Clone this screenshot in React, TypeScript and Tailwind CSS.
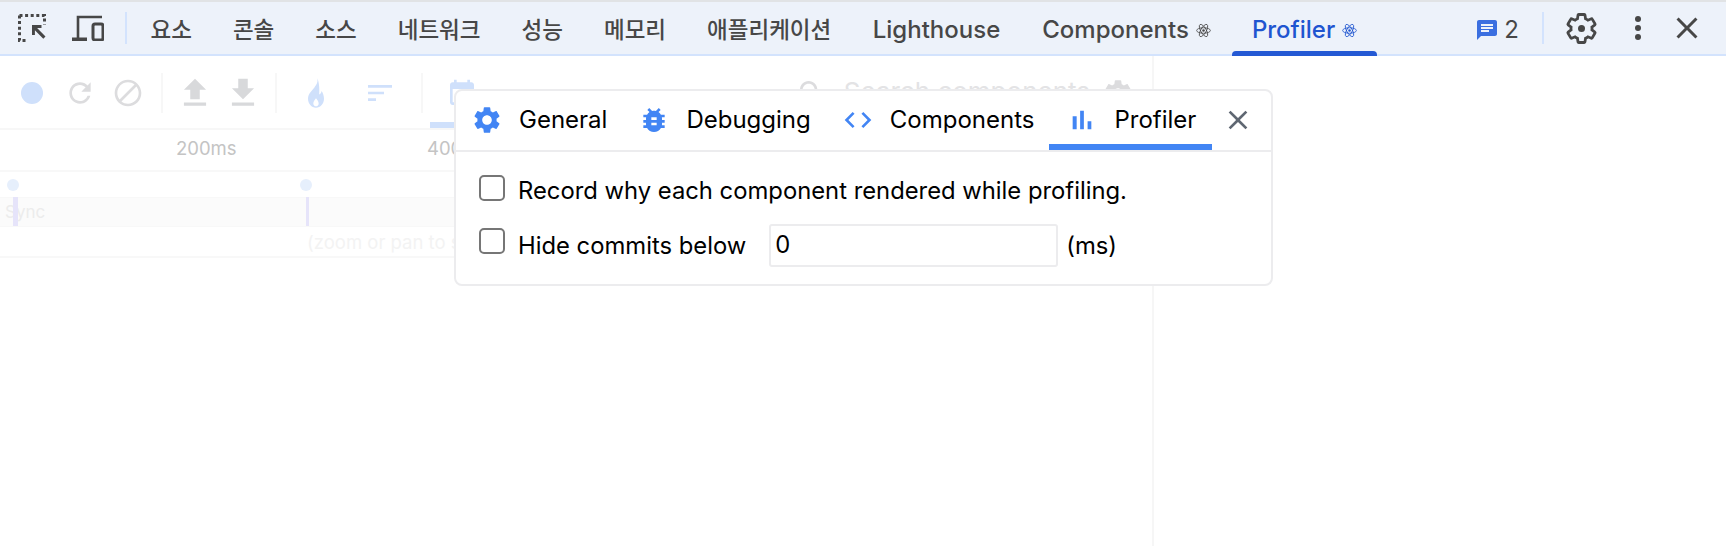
const FONT = "font-['Inter','Noto_Sans_CJK_KR',sans-serif]";

const paths = {
  gear: 'M19.14 12.94c.04-.3.06-.61.06-.94 0-.32-.02-.64-.07-.94l2.03-1.58c.18-.14.23-.41.12-.61l-1.92-3.32c-.12-.22-.37-.29-.59-.22l-2.39.96c-.5-.38-1.03-.7-1.62-.94l-.36-2.54c-.04-.24-.24-.41-.48-.41h-3.84c-.24 0-.43.17-.47.41l-.36 2.54c-.59.24-1.13.57-1.62.94l-2.39-.96c-.22-.08-.47 0-.59.22L2.74 8.87c-.12.21-.08.47.12.61l2.03 1.58c-.05.3-.09.63-.09.94s.02.64.07.94l-2.03 1.58c-.18.14-.23.41-.12.61l1.92 3.32c.12.22.37.29.59.22l2.39-.96c.5.38 1.03.7 1.62.94l.36 2.54c.05.24.24.41.48.41h3.84c.24 0 .44-.17.47-.41l.36-2.54c.59-.24 1.13-.56 1.62-.94l2.39.96c.22.08.47 0 .59-.22l1.92-3.32c.12-.22.07-.47-.12-.61l-2.01-1.58zM12 15.6c-1.98 0-3.6-1.62-3.6-3.6s1.62-3.6 3.6-3.6 3.6 1.62 3.6 3.6-1.62 3.6-3.6 3.6z',
  bug: 'M20 8h-2.81c-.45-.78-1.07-1.45-1.82-1.96L17 4.41 15.59 3l-2.17 2.17C12.96 5.06 12.49 5 12 5c-.49 0-.96.06-1.41.17L8.41 3 7 4.41l1.62 1.63C7.88 6.55 7.26 7.22 6.81 8H4v2h2.09c-.05.33-.09.66-.09 1v1H4v2h2v1c0 .34.04.67.09 1H4v2h2.81c1.04 1.79 2.97 3 5.19 3s4.15-1.21 5.19-3H20v-2h-2.09c.05-.33.09-.66.09-1v-1h2v-2h-2v-1c0-.34-.04-.67-.09-1H20V8zm-6 8h-4v-2h4v2zm0-4h-4v-2h4v2z',
  code: 'M9.4 16.6L4.8 12l4.6-4.6L8 6l-6 6 6 6 1.4-1.4zm5.2 0l4.6-4.6-4.6-4.6L16 6l6 6-6 6-1.4-1.4z',
  bars: 'M5 9.2h3V19H5zM10.6 5h2.8v14h-2.8zm5.6 8H19v6h-2.8z',
  close: 'M19 6.41L17.59 5 12 10.59 6.41 5 5 6.41 10.59 12 5 17.59 6.41 19 12 13.41 17.59 19 19 17.59 13.41 12z',
  reload: 'M17.65 6.35C16.2 4.9 14.21 4 12 4c-4.42 0-7.99 3.58-7.99 8s3.57 8 7.99 8c3.73 0 6.84-2.55 7.73-6h-2.08c-.82 2.33-3.04 4-5.65 4-3.31 0-6-2.69-6-6s2.69-6 6-6c1.66 0 3.14.69 4.22 1.78L13 11h7V4l-2.35 2.35z',
  block: 'M12 2C6.48 2 2 6.48 2 12s4.48 10 10 10 10-4.48 10-10S17.52 2 12 2zM4 12c0-4.42 3.58-8 8-8 1.85 0 3.55.63 4.9 1.69L5.69 16.9C4.63 15.55 4 13.85 4 12zm8 8c-1.85 0-3.55-.63-4.9-1.69L18.31 7.1C19.37 8.45 20 10.15 20 12c0 4.42-3.58 8-8 8z',
  upload: 'M9 16h6v-6h4l-7-7-7 7h4zm-4 2h14v2H5z',
  download: 'M19 9h-4V3H9v6H5l7 7 7-7zM5 18v2h14v-2H5z',
  flame: 'M13 1c.6 3.2-.7 5-2.3 7C9 10.2 6 12.5 6 16.3 6 20 8.7 23 12 23s6-3 6-6.7c0-2.3-.8-4.3-1.8-5.8-.3 1.3-.9 2.1-1.8 2.7.4-4.5-.2-9.7-1.4-12.2zM12 16c1 1.3 2 2.4 2 3.8 0 1.3-.9 2.2-2 2.2s-2-.9-2-2.2c0-1.4 1-2.5 2-3.8z',
  sort: 'M3 18h6v-2H3v2zM3 6v2h18V6H3zm0 7h12v-2H3v2z',
  calendar: 'M19 4h-1V2h-2v2H8V2H6v2H5c-1.1 0-2 .9-2 2v13c0 1.1.9 2 2 2h14c1.1 0 2-.9 2-2V6c0-1.1-.9-2-2-2zm0 15H5V9h14v10z',
  search: 'M15.5 14h-.79l-.28-.27C15.41 12.59 16 11.11 16 9.5 16 5.91 13.09 3 9.5 3S3 5.91 3 9.5 5.91 16 9.5 16c1.61 0 3.09-.59 4.23-1.57l.27.28v.79l5 4.99L20.49 19l-4.99-5zm-6 0C7.01 14 5 11.99 5 9.5S7.01 5 9.5 5 14 7.01 14 9.5 11.99 14 9.5 14z',
};

function Icon({ d, className }: { d: string; className: string }) {
  return (
    <svg viewBox="0 0 24 24" fill="currentColor" fillRule="evenodd" className={className}>
      <path d={d} />
    </svg>
  );
}

function Atom({ className }: { className: string }) {
  return (
    <svg viewBox="0 0 24 24" fill="none" stroke="currentColor" strokeWidth="1.3" className={className}>
      <circle cx="12" cy="12" r="2" fill="currentColor" stroke="none" />
      <ellipse cx="12" cy="12" rx="11" ry="4.4" />
      <ellipse cx="12" cy="12" rx="11" ry="4.4" transform="rotate(60 12 12)" />
      <ellipse cx="12" cy="12" rx="11" ry="4.4" transform="rotate(120 12 12)" />
    </svg>
  );
}

function KoTab({ label }: { label: string }) {
  return <div className="flex h-full items-center px-[20.5px] pt-[4px] text-[22.5px] font-medium text-[#474747]">{label}</div>;
}

function DevToolsBar() {
  return (
    <div className="box-content flex h-[52px] items-center border-b-2 border-[#d3e3fd] bg-[#edf2fa]">
      <div className="ml-[18px] flex items-center gap-[26px]">
        <svg viewBox="0 0 28 28" fill="none" className="h-7 w-7 text-[#474747]">
          <path d="M1.5 1.5h25v9M1.5 1.5v25h8" stroke="currentColor" strokeWidth="3" strokeDasharray="3 2.6" />
          <path d="M14 11h9.5v3h-4.4l8.4 8.5-2.2 2.2-8.4-8.5V21H14z" fill="currentColor" />
        </svg>
        <svg viewBox="0 0 32 26" fill="none" className="h-[26px] w-8 text-[#474747]">
          <path d="M6 23V2h24" stroke="currentColor" strokeWidth="2.6" />
          <path d="M0 22.5h15V26H0z" fill="currentColor" />
          <rect x="21" y="9" width="10" height="16" rx="2" stroke="currentColor" strokeWidth="3" />
        </svg>
      </div>
      <div className="ml-[21px] mr-[3px] h-8 w-[2px] bg-[#d3e3fd]" />
      <KoTab label="요소" />
      <KoTab label="콘솔" />
      <KoTab label="소스" />
      <KoTab label="네트워크" />
      <KoTab label="성능" />
      <KoTab label="메모리" />
      <KoTab label="애플리케이션" />
      <div className="flex h-full items-center px-[21px] pt-[4px] text-[24px] font-medium text-[#474747]">Lighthouse</div>
      <div className="flex h-full items-center gap-[7px] px-[21px] pt-[4px] text-[24px] font-medium text-[#474747]">
        Components
        <Atom className="h-[15px] w-[15px]" />
      </div>
      <div className="relative flex h-full items-center gap-[7px] px-[20px] pt-[4px] text-[24px] font-medium text-[#1f55d0]">
        Profiler
        <Atom className="h-[15px] w-[15px]" />
        <div className="absolute bottom-[-2px] left-0 right-0 h-[5px] rounded-t-[4px] bg-[#2459d4]" />
      </div>
      <div className="ml-auto flex items-center">
        <div className="flex items-center pt-[4px]">
          <Icon
            d="M20 2H4c-1.1 0-2 .9-2 2v18l4-4h14c1.1 0 2-.9 2-2V4c0-1.1-.9-2-2-2zM6 9h12v2H6V9zm8 5H6v-2h8v2zm4-6H6V6h12v2z"
            className="h-6 w-6 text-[#3b6fe0]"
          />
          <span className="ml-[5px] text-[24px] text-[#474747]">2</span>
        </div>
        <div className="ml-[23px] h-8 w-[2px] bg-[#d3e3fd]" />
        <svg viewBox="0 0 24 24" fill="none" stroke="#474747" strokeWidth="1.9" className="ml-[20px] h-[35px] w-[35px]">
          <path d="M19.14 12.94c.04-.3.06-.61.06-.94 0-.32-.02-.64-.07-.94l2.03-1.58c.18-.14.23-.41.12-.61l-1.92-3.32c-.12-.22-.37-.29-.59-.22l-2.39.96c-.5-.38-1.03-.7-1.62-.94l-.36-2.54c-.04-.24-.24-.41-.48-.41h-3.84c-.24 0-.43.17-.47.41l-.36 2.54c-.59.24-1.13.57-1.62.94l-2.39-.96c-.22-.08-.47 0-.59.22L2.74 8.87c-.12.21-.08.47.12.61l2.03 1.58c-.05.3-.09.63-.09.94s.02.64.07.94l-2.03 1.58c-.18.14-.23.41-.12.61l1.92 3.32c.12.22.37.29.59.22l2.39-.96c.5.38 1.03.7 1.62.94l.36 2.54c.05.24.24.41.48.41h3.84c.24 0 .44-.17.47-.41l.36-2.54c.59-.24 1.13-.56 1.62-.94l2.39.96c.22.08.47 0 .59-.22l1.92-3.32c.12-.22.07-.47-.12-.61l-2.01-1.58z" />
          <circle cx="12" cy="12" r="2.4" fill="#474747" stroke="none" />
        </svg>
        <div className="ml-[36px] flex flex-col gap-[3px]">
          <div className="h-[6px] w-[6px] rounded-full bg-[#474747]" />
          <div className="h-[6px] w-[6px] rounded-full bg-[#474747]" />
          <div className="h-[6px] w-[6px] rounded-full bg-[#474747]" />
        </div>
        <Icon d={paths.close} className="ml-[28px] mr-[21px] h-9 w-9 text-[#474747]" />
      </div>
    </div>
  );
}

function ToolbarSep() {
  return <div className="h-10 w-[2px] bg-[#f7f7f7]" />;
}

function ProfilerBackdrop() {
  return (
    <div className="h-[490px] w-[1154px] border-r-2 border-[#f6f6f6]">
      <div className="flex h-[74px] items-center border-b-2 border-[#f7f7f7] pt-[2px] pl-[16px]">
        <div className="flex h-8 w-8 items-center justify-center">
          <div className="h-[22px] w-[22px] rounded-full bg-[#cfe0fb]" />
        </div>
        <Icon d={paths.reload} className="ml-4 h-8 w-8 text-[#dcdcde]" />
        <Icon d={paths.block} className="ml-4 h-8 w-8 text-[#dcdcde]" />
        <div className="ml-[17px]"><ToolbarSep /></div>
        <Icon d={paths.upload} className="ml-[13px] h-[38px] w-[38px] text-[#d8d9db]" />
        <Icon d={paths.download} className="ml-[10px] h-[38px] w-[38px] text-[#d8d9db]" />
        <div className="ml-[13px]"><ToolbarSep /></div>
        <Icon d={paths.flame} className="ml-[23px] h-8 w-8 text-[#cfe0fb]" />
        <Icon d={paths.sort} className="ml-[32px] h-8 w-8 text-[#cfe0fb]" />
        <div className="ml-[25px]"><ToolbarSep /></div>
        <div className="relative ml-[7px] flex h-[70px] w-[84px] items-center pl-[16px]">
          <Icon d={paths.calendar} className="h-8 w-8 text-[#cfe0fb]" />
          <div className="absolute bottom-0 left-0 right-0 h-[6px] bg-[#cfe0fb]" />
        </div>
        <div className="ml-auto flex items-center pr-[18px] text-[26px] text-[#e3e3e5]">
          <Icon d={paths.search} className="h-8 w-8 text-[#dcdcde]" />
          <span className="-mt-[4px] ml-[16px]">Search components</span>
          <Icon d={paths.gear} className="ml-[12px] h-8 w-8 text-[#dcdcde]" />
        </div>
      </div>
      <div className="relative h-[42px] border-b-2 border-[#f8f8f8] text-[18.5px] text-[#c4c4c4]">
        <span className="absolute left-[176px] top-[5px]">200ms</span>
        <span className="absolute left-[427px] top-[5px]">400ms</span>
      </div>
      <div className="relative h-[86px] border-b-2 border-[#f8f8f8]">
        <div className="absolute left-[7px] top-[7px] h-3 w-3 rounded-full bg-[#e6effc]" />
        <div className="absolute left-[300px] top-[7px] h-3 w-3 rounded-full bg-[#e6effc]" />
        <div className="absolute left-0 right-0 top-[25px] h-[30px] border-y border-[#f8f8f8] bg-[#fbfbfb] pl-[5px] text-[17px] leading-[28px] text-[#ececec]">
          Sync
        </div>
        <div className="absolute left-[13px] top-[25px] h-[29px] w-[5px] bg-[#e6e4fa]" />
        <div className="absolute left-[306px] top-[25px] h-[29px] w-[3px] bg-[#e6e4fa]" />
        <span className="absolute left-[307px] top-[57px] text-[18.5px] text-[#f3f3f3]">(zoom or pan to see commits)</span>
      </div>
    </div>
  );
}

function SettingsTab({ d, label, active }: { d: string; label: string; active?: boolean }) {
  return (
    <div className={`flex h-full items-center gap-[16px] border-b-[6px] pl-[17px] pt-[4px] ${active ? 'ml-[1px] border-[#4285f4] pr-[16px]' : 'border-transparent pr-[14px]'}`}>
      <Icon d={d} className="h-8 w-8 text-[#4285f4]" />
      <span className="text-[24px] text-black">{label}</span>
    </div>
  );
}

function Checkbox({ className }: { className: string }) {
  return <div className={`h-[26px] w-[26px] rounded-[5px] border-2 border-[#767676] bg-white ${className}`} />;
}

function SettingsPopup() {
  return (
    <div className="absolute left-[454px] top-[87px] h-[197px] w-[819px] rounded-[8px] border-2 border-[#ececee] bg-white">
      <div className="box-content flex h-[59px] items-center border-b-2 border-[#ececee]">
        <div className="-ml-[2px] flex h-full items-center">
          <SettingsTab d={paths.gear} label="General" />
          <SettingsTab d={paths.bug} label="Debugging" />
          <SettingsTab d={paths.code} label="Components" />
          <SettingsTab d={paths.bars} label="Profiler" active />
        </div>
        <Icon d={paths.close} className="-mt-[2px] ml-[10px] h-8 w-8 text-[#5f6772]" />
      </div>
      <div className="flex flex-col pl-[23px] pt-[25px] text-[23.8px] text-black">
        <label className="flex h-[28px] items-center gap-[13px]">
          <Checkbox className="-mt-[7px]" />
          <span>Record why each component rendered while profiling.</span>
        </label>
        <label className="mt-[27px] flex h-[28px] items-center gap-[13px]">
          <Checkbox className="-mt-[10px]" />
          <span>Hide commits below</span>
          <div className="-mt-[2px] ml-[10px] flex h-[43px] w-[289px] items-center rounded-[3px] border-2 border-[#ececee] pl-[4px]">0</div>
          <span className="-ml-[5px]">(ms)</span>
        </label>
      </div>
    </div>
  );
}

export default function App() {
  return (
    <div className={`relative h-[546px] w-[1726px] overflow-hidden border-t-2 border-[#e1e3e5] bg-white ${FONT}`}>
      <DevToolsBar />
      <ProfilerBackdrop />
      <SettingsPopup />
    </div>
  );
}
